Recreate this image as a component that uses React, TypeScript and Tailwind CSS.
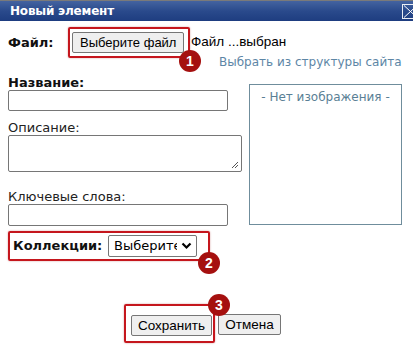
import React from "react";

const sans = { fontFamily: '"Liberation Sans", Arial, sans-serif' };

function Badge({ n, className }: { n: string; className: string }) {
  return (
    <div
      className={`absolute w-[22px] h-[22px] rounded-full bg-[#a5100f] text-white text-[14px] font-bold flex items-center justify-center leading-none ${className}`}
      style={sans}
    >
      {n}
    </div>
  );
}

export default function App() {
  return (
    <div
      className="w-[413px] h-[345px] bg-white overflow-hidden relative text-[13px] text-[#111]"
      style={{ fontFamily: '"DejaVu Sans", Verdana, sans-serif' }}
    >
      {/* title bar */}
      <div className="h-[21px] flex items-center pl-[10px] bg-gradient-to-b from-[#4463a0] via-[#2a4a8c] to-[#1e3d80] border-t border-[#7a7a7a]">
        <span className="text-white font-bold text-[12px] tracking-[-0.2px]">
          Новый элемент
        </span>
        <div className="ml-auto mr-[-6px] w-[17px] h-[15px] border border-white/90 flex items-center justify-center">
          <svg width="15" height="13" viewBox="0 0 15 13">
            <path d="M1 0.5 L14 12.5 M14 0.5 L1 12.5" stroke="white" strokeWidth="1" fill="none" />
          </svg>
        </div>
      </div>

      <div className="pl-[8px]">
        {/* file row */}
        <div className="flex items-center mt-[6px]">
          <span className="font-bold w-[60px]">Файл:</span>
          <div className="relative w-[122px] h-[31px] border-2 border-[#c5161d] rounded-[2px] shadow-[0_0_2px_rgba(150,0,0,0.4)] flex items-center pl-[2px]">
            <button
              className="h-[21px] px-[7px] bg-[#efefef] border border-[#767676] rounded-[2px] text-[13px] text-black leading-none"
              style={sans}
            >
              Выберите файл
            </button>
            <Badge n="1" className="left-[109px] top-[21px]" />
          </div>
          <span className="text-[13.5px] ml-[1px] text-black" style={sans}>
            Файл ...выбран
          </span>
        </div>
        <div className="ml-[211px] mt-[-3px] text-[12px] text-[#5d86a6] h-[14px] leading-[14px]">
          Выбрать из структуры сайта
        </div>

        {/* columns */}
        <div className="flex mt-[1px]">
          <div className="w-[241px] flex flex-col">
            <div className="font-bold h-[15px] leading-[15px] mt-[5px]">Название:</div>
            <div className="w-[220px] h-[21px] border border-[#767676] rounded-[2px]" />
            <div className="h-[15px] leading-[15px] mt-[9px] text-[#222]">Описание:</div>
            <div className="relative w-[234px] h-[37px] border border-[#767676] rounded-[2px]">
              <svg className="absolute right-[2px] bottom-[2px]" width="8" height="8" viewBox="0 0 8 8">
                <path d="M7 1 L1 7 M7 4 L4 7" stroke="#555" strokeWidth="1" />
              </svg>
            </div>
            <div className="h-[15px] leading-[15px] mt-[17px] text-[#222]">Ключевые слова:</div>
            <div className="w-[220px] h-[22px] border border-[#767676] rounded-[2px]" />
          </div>
          <div className="w-[153px] h-[141px] mt-[14px] border border-[#6f8d9c] flex justify-center">
            <span className="text-[12px] text-[#5a7f95] mt-[3px]">- Нет изображения -</span>
          </div>
        </div>

        {/* collections */}
        <div className="relative mt-[5px] w-[202px] h-[30px] border-2 border-[#c5161d] rounded-[2px] shadow-[0_0_2px_rgba(150,0,0,0.4)] flex items-center pl-[3px]">
          <span className="font-bold w-[95px]">Коллекции:</span>
          <div className="h-[22px] w-[89px] border border-[#767676] rounded-[2px] flex items-center pl-[5px] pr-[4px] text-[13px] text-black">
            <span className="overflow-hidden whitespace-nowrap w-[63px]">Выберите</span>
            <svg className="ml-auto" width="11" height="8" viewBox="0 0 11 8">
              <path d="M1.5 1.5 L5.5 5.5 L9.5 1.5" stroke="black" strokeWidth="2.2" fill="none" />
            </svg>
          </div>
          <Badge n="2" className="left-[188px] top-[19px]" />
        </div>

        {/* buttons */}
        <div className="flex items-end mt-[43px] ml-[116px]">
          <div className="relative w-[91px] h-[39px] border-2 border-[#c5161d] rounded-[2px] shadow-[0_0_2px_rgba(150,0,0,0.4)] flex items-start pl-[5px] pt-[9px]">
            <button
              className="h-[21px] w-[81px] shrink-0 bg-[#efefef] border border-[#767676] rounded-[2px] text-[13.5px] text-black leading-none"
              style={sans}
            >
              Сохранить
            </button>
            <Badge n="3" className="left-[82px] top-[-12px]" />
          </div>
          <button
            className="h-[21px] w-[63px] ml-[3px] mb-[8px] bg-[#efefef] border border-[#767676] rounded-[2px] text-[13.5px] text-black leading-none"
            style={sans}
          >
            Отмена
          </button>
        </div>
      </div>
    </div>
  );
}
